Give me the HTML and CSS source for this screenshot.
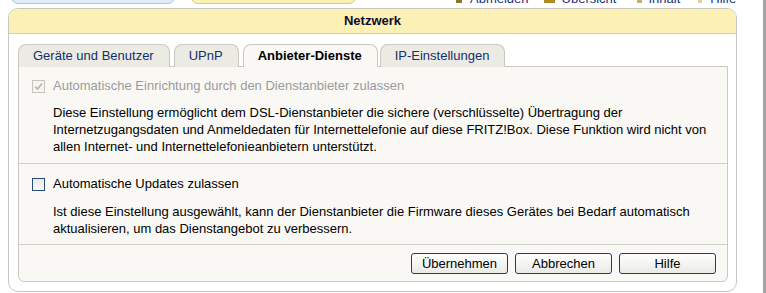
FILE: index.html
```html
<!DOCTYPE html>
<html lang="de">
<head>
  <meta charset="UTF-8" />
  <title>Netzwerk</title>
  <link rel="stylesheet" href="styles.css">
</head>
<body>
  <div class="page">
    <!-- top menu, mostly scrolled away -->
    <div class="topbar">
      <div class="menutab blue"></div>
      <div class="menutab yellow"></div>
      <div class="links">
        <span class="link l1"><i class="ico ico-a"></i>Abmelden</span>
        <span class="link l2"><i class="ico ico-b"></i>Übersicht</span>
        <span class="link l3"><i class="ico ico-c"></i>Inhalt</span>
        <span class="link l4"><i class="ico ico-d"></i>Hilfe</span>
      </div>
    </div>

    <div class="frame">
      <div class="frame-head">Netzwerk</div>
      <div class="frame-body">
        <div class="tabs">
          <div class="tab">Geräte und Benutzer</div>
          <div class="tab">UPnP</div>
          <div class="tab active">Anbieter-Dienste</div>
          <div class="tab">IP-Einstellungen</div>
        </div>

        <div class="panel">
          <div class="section first">
            <label class="check-row disabled">
              <span class="box">
                <svg width="11" height="11" viewBox="0 0 11 11"><path d="M2 5.5 L4.5 8 L9 2.5" fill="none" stroke="#b4b4ac" stroke-width="1.6"/></svg>
              </span>
              Automatische Einrichtung durch den Dienstanbieter zulassen
            </label>
            <p class="desc">Diese Einstellung ermöglicht dem DSL-Dienstanbieter die sichere (verschlüsselte) Übertragung der<br>Internetzugangsdaten und Anmeldedaten für Internettelefonie auf diese FRITZ!Box. Diese Funktion wird nicht von<br>allen Internet- und Internettelefonieanbietern unterstützt.</p>
          </div>

          <div class="section second">
            <label class="check-row">
              <span class="box"></span>
              Automatische Updates zulassen
            </label>
            <p class="desc">Ist diese Einstellung ausgewählt, kann der Dienstanbieter die Firmware dieses Gerätes bei Bedarf automatisch<br>aktualisieren, um das Dienstangebot zu verbessern.</p>
          </div>

          <div class="actions">
            <button class="btn">Übernehmen</button>
            <button class="btn">Abbrechen</button>
            <button class="btn">Hilfe</button>
          </div>
        </div>
      </div>
    </div>
  </div>
  <div class="scrollbar"></div>
</body>
</html>
```

FILE: styles.css
```css
* {
  margin: 0;
  padding: 0;
  box-sizing: border-box;
}

html, body {
  width: 766px;
  height: 293px;
  overflow: hidden;
  background: #fff;
}

body {
  display: flex;
  font-family: "Liberation Sans", Arial, sans-serif;
  font-size: 13px;
  color: #000;
}

.page {
  flex: 1;
}

.scrollbar {
  width: 3px;
  background: #a3a3a3;
}

/* top menu strip */
.topbar {
  height: 4px;
  margin-bottom: 4px;
  padding-left: 11px;
  display: flex;
  align-items: flex-end;
  overflow: hidden;
}

.menutab {
  height: 20px;
  flex: none;
  border-radius: 0 0 7px 7px;
}

.menutab.blue {
  width: 164px;
  background: #deebf8;
  border: 1px solid #b3c3d6;
}

.menutab.yellow {
  width: 165px;
  margin-left: 16px;
  background: #fdf0b5;
  border: 1px solid #d6c68e;
}

.links {
  display: flex;
  align-items: flex-end;
  flex: none;
  margin-left: 100px;
  height: 14px;
  margin-bottom: -1px;
  color: #1a2f80;
}

.link {
  display: flex;
  align-items: flex-end;
  line-height: 13px;
  white-space: nowrap;
}

.l2 { margin-left: 15px; }
.l3 { margin-left: 21px; }
.l4 { margin-left: 18px; }

.ico {
  display: inline-block;
  height: 9px;
  margin-right: 8px;
  margin-bottom: 2px;
}

.ico-a { width: 6px; background: #8a7632; }
.ico-b { width: 11px; background: #b08a2a; margin-right: 7px; }
.ico-c { width: 5px; background: #c7ae70; margin-right: 6px; }
.ico-d { width: 4px; background: #e0cfa0; margin-right: 8px; }

/* main frame */
.frame {
  width: 729px;
  height: 284px;
  margin-left: 8px;
  border: 1px solid #c6c6c0;
  border-radius: 10px;
  background: #fff;
  display: flex;
  flex-direction: column;
}

.frame-head {
  height: 25px;
  line-height: 24px;
  background: #fdf0b5;
  border-bottom: 1px solid #cfcfc5;
  border-radius: 9px 9px 0 0;
  text-align: center;
  font-weight: bold;
  color: #0c0c26;
}

.frame-body {
  flex: 1;
  padding: 10px 8px 9px 9px;
  display: flex;
  flex-direction: column;
}

.tabs {
  display: flex;
  height: 22px;
}

.tab {
  height: 23px;
  margin-right: 4px;
  padding: 0 15px 0 14px;
  line-height: 21px;
  border: 1px solid #c9c9c1;
  border-bottom: none;
  border-radius: 8px 8px 0 0;
  background: #ecebe3;
  color: #13306e;
  position: relative;
  z-index: 0;
}

.tab.active {
  background: #f9f8f4;
  color: #000;
  font-weight: bold;
  z-index: 2;
  margin-right: 2px;
}

.panel {
  flex: 1;
  border: 1px solid #c9c9c1;
  border-radius: 0 0 6px 6px;
  background: #f9f8f4;
  display: flex;
  flex-direction: column;
}

.section {
  border-bottom: 1px solid #cfcfc7;
  padding-left: 13px;
}

.section.first {
  padding-top: 10px;
  padding-bottom: 8px;
}

.section.second {
  padding-top: 11px;
  padding-bottom: 7px;
}

.check-row {
  display: flex;
  align-items: center;
  height: 18px;
  line-height: 18px;
}

.check-row .box {
  width: 13px;
  height: 13px;
  margin-right: 8px;
  border: 1px solid #2a4a78;
  background: linear-gradient(#e8e8e6, #fbfbfb);
  display: flex;
  align-items: center;
  justify-content: center;
}

.check-row.disabled {
  color: #9b9b9b;
}

.check-row.disabled .box {
  border-color: #c4c4bc;
  background: #f6f5f1;
}

.desc {
  margin-left: 21px;
  line-height: 17px;
  white-space: nowrap;
}

.first .desc {
  margin-top: 9px;
}

.second .desc {
  margin-top: 10px;
}

.actions {
  display: flex;
  justify-content: flex-end;
  gap: 7px;
  padding: 8px 11px 0 0;
}

.btn {
  width: 97px;
  height: 21px;
  font-family: inherit;
  font-size: 13px;
  color: #000;
  border: 1px solid #1d3f6c;
  border-radius: 3px;
  background: linear-gradient(#ffffff, #e9e9e6);
  cursor: pointer;
}
```
